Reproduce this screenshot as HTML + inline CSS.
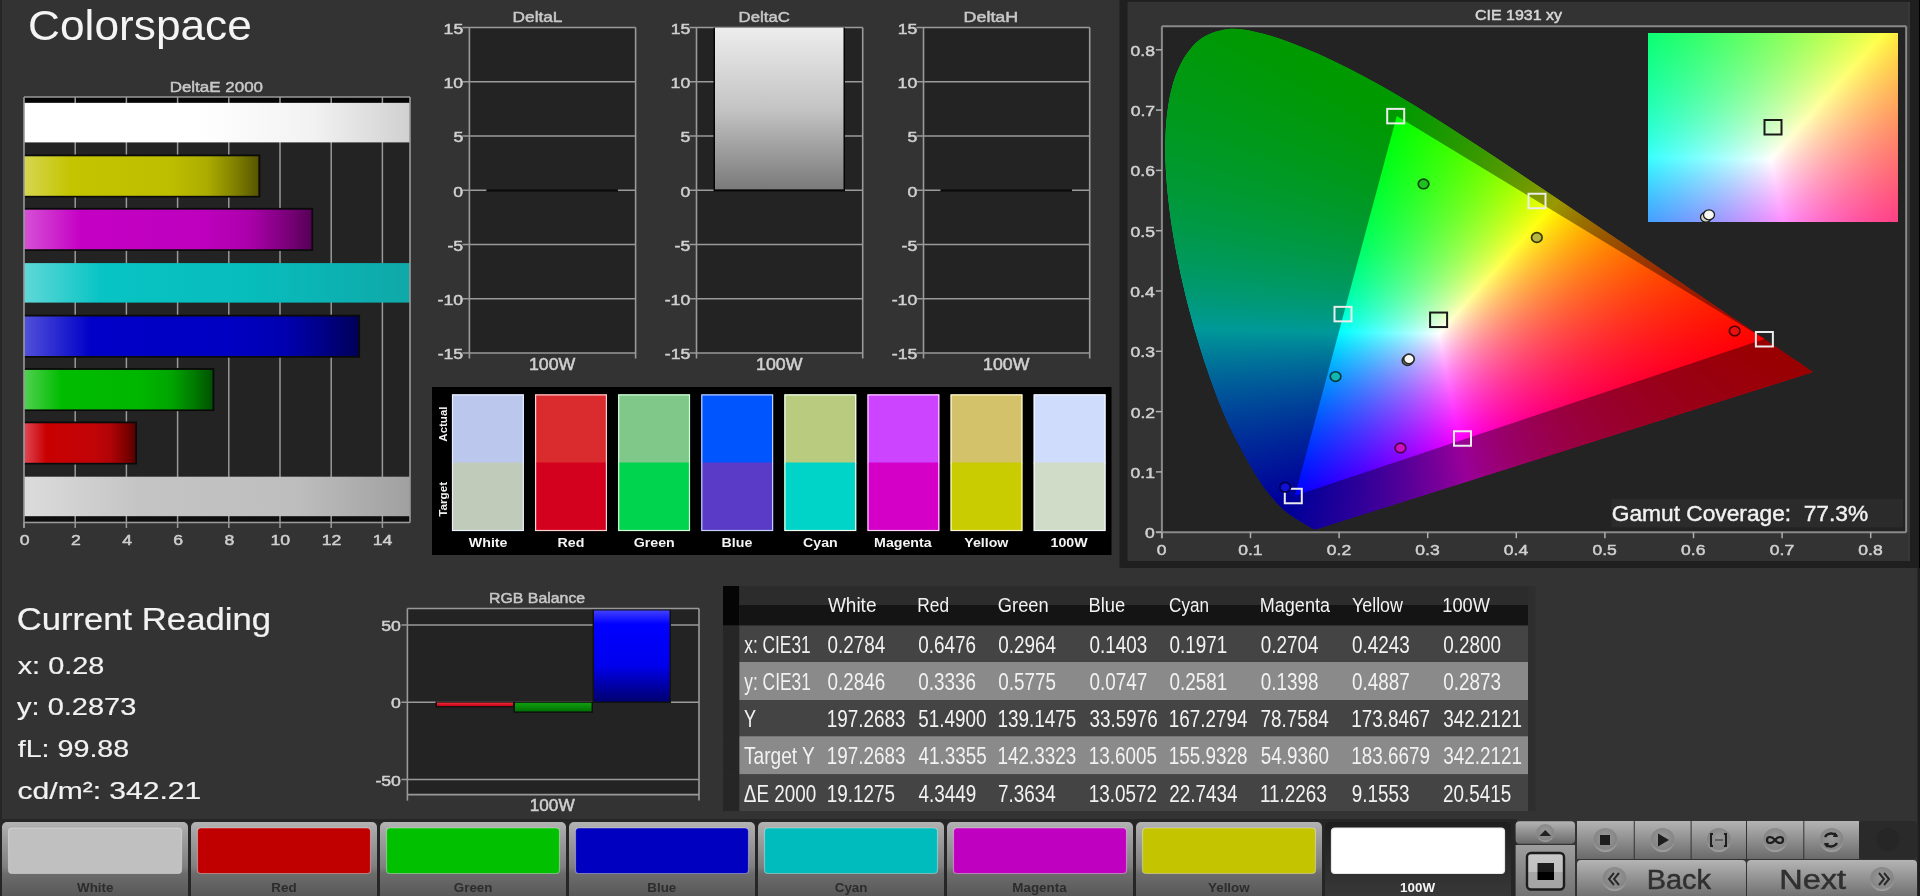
<!DOCTYPE html>
<html><head><meta charset="utf-8"><title>Colorspace</title>
<style>
html,body{margin:0;padding:0;width:1920px;height:896px;overflow:hidden;background:#333333;font-family:"Liberation Sans", sans-serif;}
svg text{font-family:"Liberation Sans", sans-serif;}
</style></head><body>
<svg width="1920" height="896" style="position:absolute;left:0;top:0;will-change:transform" font-family='"Liberation Sans", sans-serif'><defs><linearGradient id="bar0" x1="0" y1="0" x2="1" y2="0"><stop offset="0" stop-color="#ffffff"/><stop offset="0.45" stop-color="#ffffff"/><stop offset="0.75" stop-color="#f2f2f2"/><stop offset="1" stop-color="#d0d0d0"/></linearGradient><linearGradient id="bar1" x1="0" y1="0" x2="1" y2="0"><stop offset="0" stop-color="#d6d651"/><stop offset="0.2" stop-color="#c4c400"/><stop offset="0.62" stop-color="#bebe00"/><stop offset="0.78" stop-color="#acac00"/><stop offset="0.9" stop-color="#818100"/><stop offset="1" stop-color="#565600"/></linearGradient><linearGradient id="bar2" x1="0" y1="0" x2="1" y2="0"><stop offset="0" stop-color="#d651d6"/><stop offset="0.2" stop-color="#c400c4"/><stop offset="0.62" stop-color="#be00be"/><stop offset="0.78" stop-color="#ac00ac"/><stop offset="0.9" stop-color="#810081"/><stop offset="1" stop-color="#560056"/></linearGradient><linearGradient id="bar3" x1="0" y1="0" x2="1" y2="0"><stop offset="0" stop-color="#60d8d8"/><stop offset="0.2" stop-color="#08c4c4"/><stop offset="0.6" stop-color="#08bcbc"/><stop offset="1" stop-color="#10a8a8"/></linearGradient><linearGradient id="bar4" x1="0" y1="0" x2="1" y2="0"><stop offset="0" stop-color="#5151d9"/><stop offset="0.2" stop-color="#0000c8"/><stop offset="0.62" stop-color="#0000c2"/><stop offset="0.78" stop-color="#0000b0"/><stop offset="0.9" stop-color="#000084"/><stop offset="1" stop-color="#000058"/></linearGradient><linearGradient id="bar5" x1="0" y1="0" x2="1" y2="0"><stop offset="0" stop-color="#51d151"/><stop offset="0.2" stop-color="#00bc00"/><stop offset="0.62" stop-color="#00b600"/><stop offset="0.78" stop-color="#00a500"/><stop offset="0.9" stop-color="#007c00"/><stop offset="1" stop-color="#005200"/></linearGradient><linearGradient id="bar6" x1="0" y1="0" x2="1" y2="0"><stop offset="0" stop-color="#e04858"/><stop offset="0.2" stop-color="#c80000"/><stop offset="0.62" stop-color="#c20408"/><stop offset="0.78" stop-color="#b00408"/><stop offset="0.9" stop-color="#860000"/><stop offset="1" stop-color="#5a0000"/></linearGradient><linearGradient id="bar7" x1="0" y1="0" x2="1" y2="0"><stop offset="0" stop-color="#dcdcdc"/><stop offset="0.3" stop-color="#c4c4c4"/><stop offset="0.7" stop-color="#bebebe"/><stop offset="1" stop-color="#a0a0a0"/></linearGradient><linearGradient id="dcgrad" x1="0" y1="0" x2="0" y2="1"><stop offset="0" stop-color="#ededed"/><stop offset="0.5" stop-color="#c4c4c4"/><stop offset="1" stop-color="#7a7a7a"/></linearGradient><linearGradient id="rbar" x1="0" y1="0" x2="0" y2="1"><stop offset="0" stop-color="#f03040"/><stop offset="1" stop-color="#c00010"/></linearGradient><linearGradient id="gbar" x1="0" y1="0" x2="0" y2="1"><stop offset="0" stop-color="#10a010"/><stop offset="1" stop-color="#007000"/></linearGradient><linearGradient id="bbar" x1="0" y1="0" x2="0" y2="1"><stop offset="0" stop-color="#4040ff"/><stop offset="0.15" stop-color="#0000ff"/><stop offset="0.6" stop-color="#0000ee"/><stop offset="1" stop-color="#000070"/></linearGradient><linearGradient id="btng" gradientUnits="userSpaceOnUse" x1="0" y1="822" x2="0" y2="896"><stop offset="0" stop-color="#b4b4b4"/><stop offset="0.12" stop-color="#a6a6a6"/><stop offset="0.6" stop-color="#808080"/><stop offset="0.7" stop-color="#6c6c6c"/><stop offset="1" stop-color="#585858"/></linearGradient><linearGradient id="btnsel" x1="0" y1="0" x2="0" y2="1"><stop offset="0" stop-color="#1e1e1e"/><stop offset="1" stop-color="#3a3a3a"/></linearGradient><linearGradient id="ctlg" x1="0" y1="0" x2="0" y2="1"><stop offset="0" stop-color="#b4b4b4"/><stop offset="1" stop-color="#6a6a6a"/></linearGradient><radialGradient id="knob" cx="0.5" cy="0.4" r="0.6"><stop offset="0" stop-color="#9a9a9a"/><stop offset="0.8" stop-color="#858585"/><stop offset="1" stop-color="#a8a8a8"/></radialGradient><linearGradient id="ctll" x1="0" y1="0" x2="0" y2="1"><stop offset="0" stop-color="#9e9e9e"/><stop offset="1" stop-color="#727272"/></linearGradient><linearGradient id="stopbox" x1="0" y1="0" x2="0" y2="1"><stop offset="0" stop-color="#c8c8c8"/><stop offset="0.52" stop-color="#c0c0c0"/><stop offset="0.52" stop-color="#a8a8a8"/><stop offset="1" stop-color="#a4a4a4"/></linearGradient><linearGradient id="stopsq" x1="0" y1="0" x2="0" y2="1"><stop offset="0" stop-color="#1e1e1e"/><stop offset="0.55" stop-color="#1a1a1a"/><stop offset="0.55" stop-color="#000"/><stop offset="1" stop-color="#000"/></linearGradient></defs><rect x="0" y="0" width="2" height="896" fill="#262626"/><rect x="1917.5" y="568" width="2.5" height="328" fill="#1e1e1e"/><text x="28.09" y="40.20" font-size="42" fill="#f4f4f4" transform="matrix(1.0532,0,0,1,-1.494,0)" >Colorspace</text><text x="169.64" y="92.00" font-size="15.5" fill="#c8c8c8" transform="matrix(1.0952,0,0,1,-16.153,0)"  stroke="#c8c8c8" stroke-width="0.5">DeltaE 2000</text><rect x="24.0" y="97.0" width="386.0" height="425.5" fill="#232323"/><rect x="24.0" y="97.0" width="386.0" height="5.5" fill="#050505"/><rect x="24.0" y="515.5" width="386.0" height="6" fill="#0e0e0e"/><line x1="75.20" y1="97.0" x2="75.20" y2="522.5" stroke="#9a9a9a" stroke-width="1.5"/><line x1="126.40" y1="97.0" x2="126.40" y2="522.5" stroke="#9a9a9a" stroke-width="1.5"/><line x1="177.60" y1="97.0" x2="177.60" y2="522.5" stroke="#9a9a9a" stroke-width="1.5"/><line x1="228.80" y1="97.0" x2="228.80" y2="522.5" stroke="#9a9a9a" stroke-width="1.5"/><line x1="280.00" y1="97.0" x2="280.00" y2="522.5" stroke="#9a9a9a" stroke-width="1.5"/><line x1="331.20" y1="97.0" x2="331.20" y2="522.5" stroke="#9a9a9a" stroke-width="1.5"/><line x1="382.40" y1="97.0" x2="382.40" y2="522.5" stroke="#9a9a9a" stroke-width="1.5"/><rect x="24.0" y="102.90" width="386.00" height="39.5" fill="url(#bar0)"/><rect x="24.0" y="154.50" width="236.17" height="43" fill="#0a0a0a"/><rect x="24.0" y="156.30" width="234.37" height="39.5" fill="url(#bar1)"/><rect x="24.0" y="207.90" width="289.19" height="43" fill="#0a0a0a"/><rect x="24.0" y="209.70" width="287.39" height="39.5" fill="url(#bar2)"/><rect x="24.0" y="263.10" width="386.00" height="39.5" fill="url(#bar3)"/><rect x="24.0" y="314.70" width="336.06" height="43" fill="#0a0a0a"/><rect x="24.0" y="316.50" width="334.26" height="39.5" fill="url(#bar4)"/><rect x="24.0" y="368.10" width="190.29" height="43" fill="#0a0a0a"/><rect x="24.0" y="369.90" width="188.49" height="39.5" fill="url(#bar5)"/><rect x="24.0" y="421.50" width="113.03" height="43" fill="#0a0a0a"/><rect x="24.0" y="423.30" width="111.23" height="39.5" fill="url(#bar6)"/><rect x="24.0" y="476.70" width="386.00" height="39.5" fill="url(#bar7)"/><line x1="24.0" y1="97.0" x2="410.0" y2="97.0" stroke="#9a9a9a" stroke-width="1.6"/><line x1="24.0" y1="97.0" x2="24.0" y2="528.0" stroke="#9a9a9a" stroke-width="1.6"/><line x1="410.0" y1="97.0" x2="410.0" y2="522.5" stroke="#9a9a9a" stroke-width="1.6"/><line x1="24.0" y1="522.5" x2="410.0" y2="522.5" stroke="#9a9a9a" stroke-width="1.6"/><line x1="24.00" y1="522.5" x2="24.00" y2="528" stroke="#9a9a9a" stroke-width="1.5"/><text x="19.65" y="545.40" font-size="15.5" fill="#d0d0d0" transform="matrix(1.1400,0,0,1,-2.751,0)"  stroke="#d0d0d0" stroke-width="0.5">0</text><line x1="75.20" y1="522.5" x2="75.20" y2="528" stroke="#9a9a9a" stroke-width="1.5"/><text x="70.90" y="545.40" font-size="15.5" fill="#d0d0d0" transform="matrix(1.1400,0,0,1,-9.926,0)"  stroke="#d0d0d0" stroke-width="0.5">2</text><line x1="126.40" y1="522.5" x2="126.40" y2="528" stroke="#9a9a9a" stroke-width="1.5"/><text x="122.18" y="545.40" font-size="15.5" fill="#d0d0d0" transform="matrix(1.1400,0,0,1,-17.106,0)"  stroke="#d0d0d0" stroke-width="0.5">4</text><line x1="177.60" y1="522.5" x2="177.60" y2="528" stroke="#9a9a9a" stroke-width="1.5"/><text x="173.21" y="545.40" font-size="15.5" fill="#d0d0d0" transform="matrix(1.1400,0,0,1,-24.249,0)"  stroke="#d0d0d0" stroke-width="0.5">6</text><line x1="228.80" y1="522.5" x2="228.80" y2="528" stroke="#9a9a9a" stroke-width="1.5"/><text x="224.45" y="545.40" font-size="15.5" fill="#d0d0d0" transform="matrix(1.1400,0,0,1,-31.423,0)"  stroke="#d0d0d0" stroke-width="0.5">8</text><line x1="280.00" y1="522.5" x2="280.00" y2="528" stroke="#9a9a9a" stroke-width="1.5"/><text x="270.44" y="545.40" font-size="15.5" fill="#d0d0d0" transform="matrix(1.1400,0,0,1,-37.862,0)"  stroke="#d0d0d0" stroke-width="0.5">10</text><line x1="331.20" y1="522.5" x2="331.20" y2="528" stroke="#9a9a9a" stroke-width="1.5"/><text x="321.77" y="545.40" font-size="15.5" fill="#d0d0d0" transform="matrix(1.1400,0,0,1,-45.048,0)"  stroke="#d0d0d0" stroke-width="0.5">12</text><line x1="382.40" y1="522.5" x2="382.40" y2="528" stroke="#9a9a9a" stroke-width="1.5"/><text x="372.80" y="545.40" font-size="15.5" fill="#d0d0d0" transform="matrix(1.1400,0,0,1,-52.191,0)"  stroke="#d0d0d0" stroke-width="0.5">14</text><text x="512.62" y="22.50" font-size="15.5" fill="#c8c8c8" transform="matrix(1.1139,0,0,1,-58.412,0)"  stroke="#c8c8c8" stroke-width="0.5">DeltaL</text><rect x="469.4" y="27.6" width="166.2" height="325.5" fill="#232323"/><line x1="462.4" y1="27.60" x2="635.5999999999999" y2="27.60" stroke="#9a9a9a" stroke-width="1.5"/><text x="443.59" y="33.80" font-size="15.5" fill="#d0d0d0" transform="matrix(1.1400,0,0,1,-62.103,0)"  stroke="#d0d0d0" stroke-width="0.5">15</text><line x1="462.4" y1="81.85" x2="635.5999999999999" y2="81.85" stroke="#9a9a9a" stroke-width="1.5"/><text x="443.50" y="88.05" font-size="15.5" fill="#d0d0d0" transform="matrix(1.1400,0,0,1,-62.091,0)"  stroke="#d0d0d0" stroke-width="0.5">10</text><line x1="462.4" y1="136.10" x2="635.5999999999999" y2="136.10" stroke="#9a9a9a" stroke-width="1.5"/><text x="453.40" y="142.30" font-size="15.5" fill="#d0d0d0" transform="matrix(1.1400,0,0,1,-63.476,0)"  stroke="#d0d0d0" stroke-width="0.5">5</text><line x1="462.4" y1="190.35" x2="635.5999999999999" y2="190.35" stroke="#9a9a9a" stroke-width="1.5"/><text x="453.31" y="196.55" font-size="15.5" fill="#d0d0d0" transform="matrix(1.1400,0,0,1,-63.464,0)"  stroke="#d0d0d0" stroke-width="0.5">0</text><line x1="462.4" y1="244.60" x2="635.5999999999999" y2="244.60" stroke="#9a9a9a" stroke-width="1.5"/><text x="447.48" y="250.80" font-size="15.5" fill="#d0d0d0" transform="matrix(1.1400,0,0,1,-62.647,0)"  stroke="#d0d0d0" stroke-width="0.5">-5</text><line x1="462.4" y1="298.85" x2="635.5999999999999" y2="298.85" stroke="#9a9a9a" stroke-width="1.5"/><text x="437.59" y="305.05" font-size="15.5" fill="#d0d0d0" transform="matrix(1.1400,0,0,1,-61.262,0)"  stroke="#d0d0d0" stroke-width="0.5">-10</text><line x1="462.4" y1="353.10" x2="635.5999999999999" y2="353.10" stroke="#9a9a9a" stroke-width="1.5"/><text x="437.67" y="359.30" font-size="15.5" fill="#d0d0d0" transform="matrix(1.1400,0,0,1,-61.274,0)"  stroke="#d0d0d0" stroke-width="0.5">-15</text><rect x="486.4" y="189.15" width="131.5" height="2.4" fill="#0a0a0a"/><line x1="469.4" y1="27.6" x2="469.4" y2="358.60" stroke="#9a9a9a" stroke-width="1.6"/><line x1="635.5999999999999" y1="27.6" x2="635.5999999999999" y2="358.60" stroke="#9a9a9a" stroke-width="1.6"/><text x="528.96" y="369.90" font-size="16" fill="#d0d0d0" transform="matrix(1.1100,0,0,1,-58.185,0)"  stroke="#d0d0d0" stroke-width="0.5">100W</text><text x="738.66" y="22.50" font-size="15.5" fill="#c8c8c8" transform="matrix(1.0840,0,0,1,-62.081,0)"  stroke="#c8c8c8" stroke-width="0.5">DeltaC</text><rect x="696.5" y="27.6" width="166.2" height="325.5" fill="#232323"/><line x1="689.5" y1="27.60" x2="862.7" y2="27.60" stroke="#9a9a9a" stroke-width="1.5"/><text x="670.69" y="33.80" font-size="15.5" fill="#d0d0d0" transform="matrix(1.1400,0,0,1,-93.897,0)"  stroke="#d0d0d0" stroke-width="0.5">15</text><line x1="689.5" y1="81.85" x2="862.7" y2="81.85" stroke="#9a9a9a" stroke-width="1.5"/><text x="670.60" y="88.05" font-size="15.5" fill="#d0d0d0" transform="matrix(1.1400,0,0,1,-93.885,0)"  stroke="#d0d0d0" stroke-width="0.5">10</text><line x1="689.5" y1="136.10" x2="862.7" y2="136.10" stroke="#9a9a9a" stroke-width="1.5"/><text x="680.50" y="142.30" font-size="15.5" fill="#d0d0d0" transform="matrix(1.1400,0,0,1,-95.270,0)"  stroke="#d0d0d0" stroke-width="0.5">5</text><line x1="689.5" y1="190.35" x2="862.7" y2="190.35" stroke="#9a9a9a" stroke-width="1.5"/><text x="680.41" y="196.55" font-size="15.5" fill="#d0d0d0" transform="matrix(1.1400,0,0,1,-95.258,0)"  stroke="#d0d0d0" stroke-width="0.5">0</text><line x1="689.5" y1="244.60" x2="862.7" y2="244.60" stroke="#9a9a9a" stroke-width="1.5"/><text x="674.58" y="250.80" font-size="15.5" fill="#d0d0d0" transform="matrix(1.1400,0,0,1,-94.441,0)"  stroke="#d0d0d0" stroke-width="0.5">-5</text><line x1="689.5" y1="298.85" x2="862.7" y2="298.85" stroke="#9a9a9a" stroke-width="1.5"/><text x="664.69" y="305.05" font-size="15.5" fill="#d0d0d0" transform="matrix(1.1400,0,0,1,-93.056,0)"  stroke="#d0d0d0" stroke-width="0.5">-10</text><line x1="689.5" y1="353.10" x2="862.7" y2="353.10" stroke="#9a9a9a" stroke-width="1.5"/><text x="664.77" y="359.30" font-size="15.5" fill="#d0d0d0" transform="matrix(1.1400,0,0,1,-93.068,0)"  stroke="#d0d0d0" stroke-width="0.5">-15</text><rect x="713.5" y="27.6" width="131.5" height="163.75" fill="#050505"/><rect x="715.0" y="27.6" width="128.5" height="161.75" fill="url(#dcgrad)"/><line x1="696.5" y1="27.6" x2="696.5" y2="358.60" stroke="#9a9a9a" stroke-width="1.6"/><line x1="862.7" y1="27.6" x2="862.7" y2="358.60" stroke="#9a9a9a" stroke-width="1.6"/><text x="756.06" y="369.90" font-size="16" fill="#d0d0d0" transform="matrix(1.1100,0,0,1,-83.166,0)"  stroke="#d0d0d0" stroke-width="0.5">100W</text><text x="963.57" y="22.50" font-size="15.5" fill="#c8c8c8" transform="matrix(1.1544,0,0,1,-148.758,0)"  stroke="#c8c8c8" stroke-width="0.5">DeltaH</text><rect x="923.5" y="27.6" width="166.2" height="325.5" fill="#232323"/><line x1="916.5" y1="27.60" x2="1089.7" y2="27.60" stroke="#9a9a9a" stroke-width="1.5"/><text x="897.69" y="33.80" font-size="15.5" fill="#d0d0d0" transform="matrix(1.1400,0,0,1,-125.677,0)"  stroke="#d0d0d0" stroke-width="0.5">15</text><line x1="916.5" y1="81.85" x2="1089.7" y2="81.85" stroke="#9a9a9a" stroke-width="1.5"/><text x="897.60" y="88.05" font-size="15.5" fill="#d0d0d0" transform="matrix(1.1400,0,0,1,-125.665,0)"  stroke="#d0d0d0" stroke-width="0.5">10</text><line x1="916.5" y1="136.10" x2="1089.7" y2="136.10" stroke="#9a9a9a" stroke-width="1.5"/><text x="907.50" y="142.30" font-size="15.5" fill="#d0d0d0" transform="matrix(1.1400,0,0,1,-127.050,0)"  stroke="#d0d0d0" stroke-width="0.5">5</text><line x1="916.5" y1="190.35" x2="1089.7" y2="190.35" stroke="#9a9a9a" stroke-width="1.5"/><text x="907.41" y="196.55" font-size="15.5" fill="#d0d0d0" transform="matrix(1.1400,0,0,1,-127.038,0)"  stroke="#d0d0d0" stroke-width="0.5">0</text><line x1="916.5" y1="244.60" x2="1089.7" y2="244.60" stroke="#9a9a9a" stroke-width="1.5"/><text x="901.58" y="250.80" font-size="15.5" fill="#d0d0d0" transform="matrix(1.1400,0,0,1,-126.221,0)"  stroke="#d0d0d0" stroke-width="0.5">-5</text><line x1="916.5" y1="298.85" x2="1089.7" y2="298.85" stroke="#9a9a9a" stroke-width="1.5"/><text x="891.69" y="305.05" font-size="15.5" fill="#d0d0d0" transform="matrix(1.1400,0,0,1,-124.836,0)"  stroke="#d0d0d0" stroke-width="0.5">-10</text><line x1="916.5" y1="353.10" x2="1089.7" y2="353.10" stroke="#9a9a9a" stroke-width="1.5"/><text x="891.77" y="359.30" font-size="15.5" fill="#d0d0d0" transform="matrix(1.1400,0,0,1,-124.848,0)"  stroke="#d0d0d0" stroke-width="0.5">-15</text><rect x="940.5" y="189.15" width="131.5" height="2.4" fill="#0a0a0a"/><line x1="923.5" y1="27.6" x2="923.5" y2="358.60" stroke="#9a9a9a" stroke-width="1.6"/><line x1="1089.7" y1="27.6" x2="1089.7" y2="358.60" stroke="#9a9a9a" stroke-width="1.6"/><text x="983.06" y="369.90" font-size="16" fill="#d0d0d0" transform="matrix(1.1100,0,0,1,-108.136,0)"  stroke="#d0d0d0" stroke-width="0.5">100W</text><rect x="432" y="387" width="679.5" height="168" fill="#000"/><rect x="452.00" y="394.4" width="71.8" height="70" fill="#bcc7ee"/><rect x="452.00" y="462.5" width="71.8" height="68.5" fill="#c0cbb9"/><rect x="452.50" y="394.9" width="70.8" height="135.6" fill="none" stroke="#e8f0ff" stroke-width="1.2"/><text x="468.82" y="546.50" font-size="12.4" fill="#f4f4f4" font-weight="bold" transform="matrix(1.1460,0,0,1,-68.448,0)" >White</text><rect x="535.10" y="394.4" width="71.8" height="70" fill="#da2b2f"/><rect x="535.10" y="462.5" width="71.8" height="68.5" fill="#d3001e"/><rect x="535.60" y="394.9" width="70.8" height="135.6" fill="none" stroke="#ffd0d0" stroke-width="1.2"/><text x="557.57" y="546.50" font-size="12.4" fill="#f4f4f4" font-weight="bold" transform="matrix(1.1460,0,0,1,-81.405,0)" >Red</text><rect x="618.20" y="394.4" width="71.8" height="70" fill="#7fc88a"/><rect x="618.20" y="462.5" width="71.8" height="68.5" fill="#00d44e"/><rect x="618.70" y="394.9" width="70.8" height="135.6" fill="none" stroke="#d0ffd8" stroke-width="1.2"/><text x="633.71" y="546.50" font-size="12.4" fill="#f4f4f4" font-weight="bold" transform="matrix(1.1460,0,0,1,-92.521,0)" >Green</text><rect x="701.30" y="394.4" width="71.8" height="70" fill="#0055ff"/><rect x="701.30" y="462.5" width="71.8" height="68.5" fill="#5a3bc8"/><rect x="701.80" y="394.9" width="70.8" height="135.6" fill="none" stroke="#c0d0ff" stroke-width="1.2"/><text x="721.60" y="546.50" font-size="12.4" fill="#f4f4f4" font-weight="bold" transform="matrix(1.1460,0,0,1,-105.354,0)" >Blue</text><rect x="784.40" y="394.4" width="71.8" height="70" fill="#b8cb7e"/><rect x="784.40" y="462.5" width="71.8" height="68.5" fill="#00d4c8"/><rect x="784.90" y="394.9" width="70.8" height="135.6" fill="none" stroke="#f0fff0" stroke-width="1.2"/><text x="803.07" y="546.50" font-size="12.4" fill="#f4f4f4" font-weight="bold" transform="matrix(1.1460,0,0,1,-117.248,0)" >Cyan</text><rect x="867.50" y="394.4" width="71.8" height="70" fill="#cc44ff"/><rect x="867.50" y="462.5" width="71.8" height="68.5" fill="#d400c8"/><rect x="868.00" y="394.9" width="70.8" height="135.6" fill="none" stroke="#ffd8ff" stroke-width="1.2"/><text x="874.06" y="546.50" font-size="12.4" fill="#f4f4f4" font-weight="bold" transform="matrix(1.1460,0,0,1,-127.612,0)" >Magenta</text><rect x="950.60" y="394.4" width="71.8" height="70" fill="#d3c26a"/><rect x="950.60" y="462.5" width="71.8" height="68.5" fill="#c8cc00"/><rect x="951.10" y="394.9" width="70.8" height="135.6" fill="none" stroke="#fff8d0" stroke-width="1.2"/><text x="964.23" y="546.50" font-size="12.4" fill="#f4f4f4" font-weight="bold" transform="matrix(1.1460,0,0,1,-140.777,0)" >Yellow</text><rect x="1033.70" y="394.4" width="71.8" height="70" fill="#d0dcfc"/><rect x="1033.70" y="462.5" width="71.8" height="68.5" fill="#d0dcc8"/><rect x="1034.20" y="394.9" width="70.8" height="135.6" fill="none" stroke="#f4f8ff" stroke-width="1.2"/><text x="1050.59" y="546.50" font-size="12.4" fill="#f4f4f4" font-weight="bold" transform="matrix(1.1460,0,0,1,-153.387,0)" >100W</text><g transform="translate(447.4,424.35) rotate(-90)"><text x="-17.34" y="0.00" font-size="11.5" fill="#f0f0f0" font-weight="bold" transform="matrix(1.0001,0,0,1,0.001,0)" >Actual</text></g><g transform="translate(447.4,499.35) rotate(-90)"><text x="-17.47" y="0.00" font-size="11.5" fill="#f0f0f0" font-weight="bold" transform="matrix(1.0194,0,0,1,0.339,0)" >Target</text></g><rect x="1119.5" y="0" width="800.5" height="568" fill="#1f1f1f"/><rect x="1127.5" y="1.8" width="780.5" height="559.2" fill="#333333"/><rect x="1908" y="1.8" width="2" height="559.2" fill="#383838"/><rect x="1919" y="0" width="1" height="568" fill="#000"/><text x="1475.00" y="20.40" font-size="14.9" fill="#d6d6d6" transform="matrix(1.0723,0,0,1,-106.691,0)"  stroke="#d6d6d6" stroke-width="0.5">CIE 1931 xy</text><rect x="1161.9" y="26.2" width="744.3" height="506.0" fill="#232323"/></svg>
<div style="position:absolute;left:1161.9px;top:26.2px;width:744.3px;height:506.0px;overflow:hidden">
<div style="position:absolute;left:0;top:0;width:100%;height:100%;clip-path:path('M154.3,503.0 C154.2,503.0 154.1,503.0 154.0,503.0 C153.9,503.1 153.7,503.1 153.5,503.1 C153.4,503.1 153.2,503.1 152.9,503.1 C152.6,503.1 152.2,503.0 151.9,502.9 C151.5,502.8 151.3,502.7 150.9,502.5 C150.5,502.3 150.1,502.1 149.6,501.8 C149.1,501.6 148.5,501.2 147.9,500.8 C147.2,500.4 146.5,499.9 145.7,499.4 C144.8,498.9 143.9,498.4 142.7,497.7 C141.6,497.0 140.2,496.2 138.7,495.3 C137.3,494.4 135.6,493.5 133.8,492.3 C131.9,491.1 129.9,489.8 127.6,488.1 C125.3,486.4 123.0,484.8 120.1,481.9 C117.1,479.1 113.8,475.9 110.0,471.1 C106.1,466.4 101.9,461.2 97.1,453.7 C92.3,446.1 86.9,437.4 80.9,426.0 C74.9,414.5 67.6,401.3 60.9,385.0 C54.1,368.7 46.9,349.4 40.2,328.1 C33.5,306.8 26.3,281.6 20.8,257.1 C15.3,232.7 10.2,205.7 7.3,181.3 C4.4,157.0 2.6,132.4 3.5,111.2 C4.3,89.9 7.1,69.4 12.3,53.6 C17.5,37.8 25.5,24.8 34.5,16.4 C43.4,8.0 54.7,4.6 65.8,3.2 C76.9,1.8 89.3,5.0 101.2,7.8 C113.1,10.6 125.4,15.6 137.1,20.0 C148.7,24.5 159.8,29.5 170.9,34.7 C182.0,39.9 192.7,45.4 203.4,51.2 C214.2,56.9 224.9,63.0 235.5,69.2 C246.1,75.5 256.7,82.0 267.2,88.5 C277.8,95.1 288.3,101.9 298.8,108.7 C309.4,115.5 320.0,122.5 330.6,129.4 C341.1,136.4 351.6,143.5 362.1,150.5 C372.6,157.5 383.1,164.5 393.5,171.5 C403.8,178.5 414.1,185.5 424.2,192.3 C434.3,199.2 444.3,206.0 454.1,212.6 C463.8,219.2 473.4,225.7 482.7,232.0 C492.0,238.3 501.0,244.4 509.6,250.2 C518.2,256.0 526.5,261.7 534.2,266.9 C541.8,272.1 548.8,276.8 555.5,281.4 C562.2,285.9 568.6,290.2 574.3,294.1 C580.0,298.0 585.2,301.4 589.9,304.6 C594.6,307.8 598.8,310.6 602.6,313.2 C606.4,315.8 609.6,318.0 612.7,320.1 C615.7,322.1 618.3,323.9 620.7,325.5 C623.2,327.2 625.2,328.6 627.2,329.9 C629.2,331.3 631.0,332.5 632.6,333.6 C634.2,334.7 635.7,335.7 637.0,336.6 C638.4,337.5 639.5,338.3 640.6,339.0 C641.6,339.7 642.5,340.2 643.2,340.8 C644.0,341.3 644.7,341.8 645.3,342.2 C645.9,342.6 646.2,342.8 646.8,343.2 C647.3,343.6 648.0,344.1 648.6,344.4 C649.1,344.7 649.4,345.0 649.8,345.2 C650.2,345.5 650.8,345.9 650.9,346.0 Z');background:conic-gradient(from 0deg at 277.1px 307.6px, #1dff00 0deg, #71ff00 20deg, #efff00 40deg, #ff8700 60deg, #ff3502 80deg, #ff0022 100deg, #ff0049 120deg, #ff007b 140deg, #ff00cd 160deg, #f800ff 170deg, #c000ff 180deg, #5c00ff 200deg, #0000ff 220deg, #003eff 240deg, #00acff 260deg, #00f8ff 270deg, #00ffbd 280deg, #00ff62 300deg, #00ff2b 320deg, #00ff06 340deg, #1dff00 360deg);filter:brightness(0.6)"></div>
<div style="position:absolute;left:0;top:0;width:100%;height:100%;clip-path:polygon(234.8px 89.9px,602.5px 313.0px,132.9px 469.8px);background:radial-gradient(ellipse 150px 120px at 277.1px 307.6px, rgba(255,255,255,1) 0%, rgba(255,255,255,0.6) 25%, rgba(255,255,255,0.25) 60%, rgba(255,255,255,0) 100%),conic-gradient(from 0deg at 277.1px 307.6px, #1dff00 0deg, #71ff00 20deg, #efff00 40deg, #ff8700 60deg, #ff3502 80deg, #ff0022 100deg, #ff0049 120deg, #ff007b 140deg, #ff00cd 160deg, #f800ff 170deg, #c000ff 180deg, #5c00ff 200deg, #0000ff 220deg, #003eff 240deg, #00acff 260deg, #00f8ff 270deg, #00ffbd 280deg, #00ff62 300deg, #00ff2b 320deg, #00ff06 340deg, #1dff00 360deg)"></div>
<canvas id="cie" width="744" height="506" style="position:absolute;left:0;top:0"></canvas>
</div>
<div style="position:absolute;left:1647.5px;top:32.8px;width:250.5px;height:189.5px;background:radial-gradient(circle at 123.5px 127.2px, rgba(255,255,255,1) 0px, rgba(255,255,255,0.7) 25px, rgba(255,255,255,0.25) 90px, rgba(255,255,255,0) 180px),conic-gradient(from 0deg at 123.5px 127.2px, #a0ff80 0deg, #ffff70 40deg, #ffa060 75deg, #ff6070 110deg, #ff4080 140deg, #ff80ff 178deg, #a080ff 215deg, #40a0ff 245deg, #20ffff 272deg, #40ff90 310deg, #00ff60 335deg, #a0ff80 360deg)">
<canvas id="inset" width="251" height="190" style="position:absolute;left:0;top:0;width:250.5px;height:189.5px"></canvas></div>
<svg width="1920" height="896" style="position:absolute;left:0;top:0;will-change:transform" font-family='"Liberation Sans", sans-serif'><line x1="1161.9" y1="26.2" x2="1906.2" y2="26.2" stroke="#8a8a8a" stroke-width="2"/><line x1="1161.9" y1="26.2" x2="1161.9" y2="538.2" stroke="#8a8a8a" stroke-width="2"/><line x1="1906.2" y1="26.2" x2="1906.2" y2="532.2" stroke="#8a8a8a" stroke-width="2"/><line x1="1155.9" y1="532.2" x2="1906.2" y2="532.2" stroke="#8a8a8a" stroke-width="2"/><line x1="1155.9" y1="532.20" x2="1161.9" y2="532.20" stroke="#b0b0b0" stroke-width="1.5"/><text x="1145.07" y="538.20" font-size="15" fill="#d0d0d0" transform="matrix(1.1700,0,0,1,-194.663,0)"  stroke="#d0d0d0" stroke-width="0.5">0</text><line x1="1161.90" y1="532.2" x2="1161.90" y2="538.2" stroke="#b0b0b0" stroke-width="1.5"/><text x="1156.79" y="555.00" font-size="15" fill="#d0d0d0" transform="matrix(1.1700,0,0,1,-196.654,0)"  stroke="#d0d0d0" stroke-width="0.5">0</text><line x1="1155.9" y1="471.90" x2="1161.9" y2="471.90" stroke="#b0b0b0" stroke-width="1.5"/><text x="1130.60" y="477.90" font-size="15" fill="#d0d0d0" transform="matrix(1.1700,0,0,1,-192.201,0)"  stroke="#d0d0d0" stroke-width="0.5">0.1</text><line x1="1250.50" y1="532.2" x2="1250.50" y2="538.2" stroke="#b0b0b0" stroke-width="1.5"/><text x="1238.15" y="555.00" font-size="15" fill="#d0d0d0" transform="matrix(1.1700,0,0,1,-210.485,0)"  stroke="#d0d0d0" stroke-width="0.5">0.1</text><line x1="1155.9" y1="411.60" x2="1161.9" y2="411.60" stroke="#b0b0b0" stroke-width="1.5"/><text x="1130.68" y="417.60" font-size="15" fill="#d0d0d0" transform="matrix(1.1700,0,0,1,-192.216,0)"  stroke="#d0d0d0" stroke-width="0.5">0.2</text><line x1="1339.10" y1="532.2" x2="1339.10" y2="538.2" stroke="#b0b0b0" stroke-width="1.5"/><text x="1326.79" y="555.00" font-size="15" fill="#d0d0d0" transform="matrix(1.1700,0,0,1,-225.554,0)"  stroke="#d0d0d0" stroke-width="0.5">0.2</text><line x1="1155.9" y1="351.30" x2="1161.9" y2="351.30" stroke="#b0b0b0" stroke-width="1.5"/><text x="1130.51" y="357.30" font-size="15" fill="#d0d0d0" transform="matrix(1.1700,0,0,1,-192.186,0)"  stroke="#d0d0d0" stroke-width="0.5">0.3</text><line x1="1427.70" y1="532.2" x2="1427.70" y2="538.2" stroke="#b0b0b0" stroke-width="1.5"/><text x="1415.30" y="555.00" font-size="15" fill="#d0d0d0" transform="matrix(1.1700,0,0,1,-240.601,0)"  stroke="#d0d0d0" stroke-width="0.5">0.3</text><line x1="1155.9" y1="291.00" x2="1161.9" y2="291.00" stroke="#b0b0b0" stroke-width="1.5"/><text x="1130.33" y="297.00" font-size="15" fill="#d0d0d0" transform="matrix(1.1700,0,0,1,-192.156,0)"  stroke="#d0d0d0" stroke-width="0.5">0.4</text><line x1="1516.30" y1="532.2" x2="1516.30" y2="538.2" stroke="#b0b0b0" stroke-width="1.5"/><text x="1503.82" y="555.00" font-size="15" fill="#d0d0d0" transform="matrix(1.1700,0,0,1,-255.649,0)"  stroke="#d0d0d0" stroke-width="0.5">0.4</text><line x1="1155.9" y1="230.70" x2="1161.9" y2="230.70" stroke="#b0b0b0" stroke-width="1.5"/><text x="1130.51" y="236.70" font-size="15" fill="#d0d0d0" transform="matrix(1.1700,0,0,1,-192.186,0)"  stroke="#d0d0d0" stroke-width="0.5">0.5</text><line x1="1604.90" y1="532.2" x2="1604.90" y2="538.2" stroke="#b0b0b0" stroke-width="1.5"/><text x="1592.50" y="555.00" font-size="15" fill="#d0d0d0" transform="matrix(1.1700,0,0,1,-270.725,0)"  stroke="#d0d0d0" stroke-width="0.5">0.5</text><line x1="1155.9" y1="170.40" x2="1161.9" y2="170.40" stroke="#b0b0b0" stroke-width="1.5"/><text x="1130.51" y="176.40" font-size="15" fill="#d0d0d0" transform="matrix(1.1700,0,0,1,-192.186,0)"  stroke="#d0d0d0" stroke-width="0.5">0.6</text><line x1="1693.50" y1="532.2" x2="1693.50" y2="538.2" stroke="#b0b0b0" stroke-width="1.5"/><text x="1681.10" y="555.00" font-size="15" fill="#d0d0d0" transform="matrix(1.1700,0,0,1,-285.787,0)"  stroke="#d0d0d0" stroke-width="0.5">0.6</text><line x1="1155.9" y1="110.10" x2="1161.9" y2="110.10" stroke="#b0b0b0" stroke-width="1.5"/><text x="1130.68" y="116.10" font-size="15" fill="#d0d0d0" transform="matrix(1.1700,0,0,1,-192.216,0)"  stroke="#d0d0d0" stroke-width="0.5">0.7</text><line x1="1782.10" y1="532.2" x2="1782.10" y2="538.2" stroke="#b0b0b0" stroke-width="1.5"/><text x="1769.79" y="555.00" font-size="15" fill="#d0d0d0" transform="matrix(1.1700,0,0,1,-300.864,0)"  stroke="#d0d0d0" stroke-width="0.5">0.7</text><line x1="1155.9" y1="49.80" x2="1161.9" y2="49.80" stroke="#b0b0b0" stroke-width="1.5"/><text x="1130.51" y="55.80" font-size="15" fill="#d0d0d0" transform="matrix(1.1700,0,0,1,-192.186,0)"  stroke="#d0d0d0" stroke-width="0.5">0.8</text><line x1="1870.70" y1="532.2" x2="1870.70" y2="538.2" stroke="#b0b0b0" stroke-width="1.5"/><text x="1858.30" y="555.00" font-size="15" fill="#d0d0d0" transform="matrix(1.1700,0,0,1,-315.911,0)"  stroke="#d0d0d0" stroke-width="0.5">0.8</text><rect x="1387.19" y="108.88" width="17" height="14.5" fill="none" stroke="#ececec" stroke-width="2"/><rect x="1755.88" y="331.99" width="17" height="14.5" fill="none" stroke="#ececec" stroke-width="2"/><rect x="1284.80" y="488.77" width="17" height="14.5" fill="none" stroke="#ececec" stroke-width="2"/><rect x="1334.50" y="306.85" width="17" height="14.5" fill="none" stroke="#ececec" stroke-width="2"/><rect x="1454.00" y="431.25" width="17" height="14.5" fill="none" stroke="#ececec" stroke-width="2"/><rect x="1528.50" y="193.75" width="17" height="14.5" fill="none" stroke="#ececec" stroke-width="2"/><rect x="1430.10" y="312.55" width="17" height="14.5" fill="none" stroke="#1a1a1a" stroke-width="2"/><ellipse cx="1734.67" cy="331.04" rx="5.3" ry="4.8" fill="#e81010" stroke="#500000" stroke-width="1.7"/><ellipse cx="1423.51" cy="183.97" rx="5.3" ry="4.8" fill="#20c020" stroke="#004800" stroke-width="1.7"/><ellipse cx="1285.21" cy="487.16" rx="5.3" ry="4.8" fill="#1010d8" stroke="#000048" stroke-width="1.7"/><ellipse cx="1335.53" cy="376.57" rx="5.3" ry="4.8" fill="#10b8b0" stroke="#003c3c" stroke-width="1.7"/><ellipse cx="1400.47" cy="447.90" rx="5.3" ry="4.8" fill="#d010c0" stroke="#4a0048" stroke-width="1.7"/><ellipse cx="1536.83" cy="237.51" rx="5.3" ry="4.8" fill="#b8b840" stroke="#3a3a00" stroke-width="1.7"/><ellipse cx="1407.56" cy="360.59" rx="5.3" ry="4.8" fill="#c8c8b8" stroke="#2a2a2a" stroke-width="1.7"/><ellipse cx="1408.98" cy="358.96" rx="5.3" ry="4.8" fill="#f8f8f4" stroke="#2a2a2a" stroke-width="1.7"/><rect x="1764.5" y="120" width="17" height="14.5" fill="none" stroke="#1a1a1a" stroke-width="2"/><ellipse cx="1706" cy="217.2" rx="5.5" ry="5" fill="#d0d0c0" stroke="#1a1a1a" stroke-width="1.3"/><ellipse cx="1709" cy="214.8" rx="5.5" ry="5" fill="#f8f8f4" stroke="#1a1a1a" stroke-width="1.3"/><rect x="1611.5" y="499" width="291.5" height="28.3" fill="#2b2b2b"/><text x="1611.86" y="520.70" font-size="21.3" fill="#f2f2f2" transform="matrix(1.0672,0,0,1,-108.376,0)"  stroke="#f2f2f2" stroke-width="0.4">Gamut Coverage:  77.3%</text><text x="16.67" y="630.30" font-size="31.6" fill="#f2f2f2" transform="matrix(1.0973,0,0,1,-1.622,0)"  stroke="#f2f2f2" stroke-width="0.2">Current Reading</text><text x="17.71" y="673.60" font-size="24.5" fill="#f2f2f2" transform="matrix(1.1774,0,0,1,-3.143,0)"  stroke="#f2f2f2" stroke-width="0.2">x: 0.28</text><text x="17.06" y="715.00" font-size="24.5" fill="#f2f2f2" transform="matrix(1.1834,0,0,1,-3.127,0)"  stroke="#f2f2f2" stroke-width="0.2">y: 0.2873</text><text x="17.67" y="757.50" font-size="24.5" fill="#f2f2f2" transform="matrix(1.1707,0,0,1,-3.017,0)"  stroke="#f2f2f2" stroke-width="0.2">fL: 99.88</text><text x="17.55" y="799.40" font-size="24.5" fill="#f2f2f2" transform="matrix(1.2269,0,0,1,-3.981,0)"  stroke="#f2f2f2" stroke-width="0.2">cd/m²: 342.21</text><text x="489.03" y="603.40" font-size="15.2" fill="#c8c8c8" transform="matrix(1.0453,0,0,1,-22.161,0)"  stroke="#c8c8c8" stroke-width="0.5">RGB Balance</text><rect x="407.4" y="608.5" width="291.6" height="186.1" fill="#232323"/><line x1="401.4" y1="625.00" x2="699.0" y2="625.00" stroke="#9a9a9a" stroke-width="1.5"/><text x="381.30" y="631.20" font-size="15.5" fill="#d0d0d0" transform="matrix(1.1400,0,0,1,-53.383,0)"  stroke="#d0d0d0" stroke-width="0.5">50</text><line x1="401.4" y1="702.25" x2="699.0" y2="702.25" stroke="#9a9a9a" stroke-width="1.5"/><text x="391.11" y="708.45" font-size="15.5" fill="#d0d0d0" transform="matrix(1.1400,0,0,1,-54.756,0)"  stroke="#d0d0d0" stroke-width="0.5">0</text><line x1="401.4" y1="779.50" x2="699.0" y2="779.50" stroke="#9a9a9a" stroke-width="1.5"/><text x="375.39" y="785.70" font-size="15.5" fill="#d0d0d0" transform="matrix(1.1400,0,0,1,-52.554,0)"  stroke="#d0d0d0" stroke-width="0.5">-50</text><rect x="435.5" y="701.5" width="79" height="6" fill="#111"/><rect x="437" y="702.6" width="76" height="3.5" fill="url(#rbar)"/><rect x="513.5" y="701.5" width="79.5" height="11.5" fill="#111"/><rect x="515" y="702.8" width="76.5" height="8.6" fill="url(#gbar)"/><rect x="592.5" y="609" width="78.5" height="94" fill="#111"/><rect x="594" y="610.5" width="75.5" height="91" fill="url(#bbar)"/><line x1="407.4" y1="608.5" x2="699.0" y2="608.5" stroke="#9a9a9a" stroke-width="1.6"/><line x1="407.4" y1="608.5" x2="407.4" y2="800.6" stroke="#9a9a9a" stroke-width="1.6"/><line x1="699.0" y1="608.5" x2="699.0" y2="800.6" stroke="#9a9a9a" stroke-width="1.6"/><line x1="407.4" y1="794.6" x2="699.0" y2="794.6" stroke="#9a9a9a" stroke-width="1.6"/><text x="529.71" y="811.50" font-size="16" fill="#d0d0d0" transform="matrix(1.0774,0,0,1,-41.008,0)"  stroke="#d0d0d0" stroke-width="0.5">100W</text><rect x="723" y="586" width="16.4" height="39.6" fill="#050505"/><rect x="739.4" y="586" width="788.6" height="19" fill="#2c2c2c"/><rect x="739.4" y="605" width="788.6" height="20.6" fill="#141414"/><rect x="1528" y="586" width="7.5" height="225" fill="#2e2e2e"/><rect x="723" y="625.6" width="16.4" height="36.40" fill="#262626"/><rect x="739.4" y="625.6" width="788.6" height="36.40" fill="#444444"/><rect x="723" y="662.0" width="16.4" height="38.00" fill="#262626"/><rect x="739.4" y="662.0" width="788.6" height="38.00" fill="#8a8a8a"/><rect x="723" y="700.0" width="16.4" height="36.25" fill="#262626"/><rect x="739.4" y="700.0" width="788.6" height="36.25" fill="#444444"/><rect x="723" y="736.25" width="16.4" height="38.15" fill="#262626"/><rect x="739.4" y="736.25" width="788.6" height="38.15" fill="#8a8a8a"/><rect x="723" y="774.4" width="16.4" height="36.60" fill="#262626"/><rect x="739.4" y="774.4" width="788.6" height="36.60" fill="#444444"/><text x="827.90" y="612.50" font-size="19.6" fill="#f2f2f2" transform="matrix(0.9695,0,0,1,25.260,0)" >White</text><text x="917.37" y="612.50" font-size="19.6" fill="#f2f2f2" transform="matrix(0.8830,0,0,1,107.290,0)" >Red</text><text x="997.84" y="612.50" font-size="19.6" fill="#f2f2f2" transform="matrix(0.9333,0,0,1,66.555,0)" >Green</text><text x="1088.53" y="612.50" font-size="19.6" fill="#f2f2f2" transform="matrix(0.9361,0,0,1,69.607,0)" >Blue</text><text x="1169.14" y="612.50" font-size="19.6" fill="#f2f2f2" transform="matrix(0.8733,0,0,1,148.104,0)" >Cyan</text><text x="1259.81" y="612.50" font-size="19.6" fill="#f2f2f2" transform="matrix(0.9200,0,0,1,100.785,0)" >Magenta</text><text x="1352.05" y="612.50" font-size="19.6" fill="#f2f2f2" transform="matrix(0.9104,0,0,1,121.097,0)" >Yellow</text><text x="1442.38" y="612.50" font-size="19.6" fill="#f2f2f2" transform="matrix(0.9308,0,0,1,99.747,0)" >100W</text><text x="744.23" y="652.75" font-size="23.6" fill="#f2f2f2" transform="matrix(0.7350,0,0,1,197.220,0)" >x: CIE31</text><text x="827.44" y="652.75" font-size="23.6" fill="#f2f2f2" transform="matrix(0.8000,0,0,1,165.489,0)" >0.2784</text><text x="918.19" y="652.75" font-size="23.6" fill="#f2f2f2" transform="matrix(0.8000,0,0,1,183.639,0)" >0.6476</text><text x="998.19" y="652.75" font-size="23.6" fill="#f2f2f2" transform="matrix(0.8000,0,0,1,199.639,0)" >0.2964</text><text x="1089.44" y="652.75" font-size="23.6" fill="#f2f2f2" transform="matrix(0.8000,0,0,1,217.889,0)" >0.1403</text><text x="1169.44" y="652.75" font-size="23.6" fill="#f2f2f2" transform="matrix(0.8000,0,0,1,233.889,0)" >0.1971</text><text x="1260.69" y="652.75" font-size="23.6" fill="#f2f2f2" transform="matrix(0.8000,0,0,1,252.139,0)" >0.2704</text><text x="1351.94" y="652.75" font-size="23.6" fill="#f2f2f2" transform="matrix(0.8000,0,0,1,270.389,0)" >0.4243</text><text x="1443.19" y="652.75" font-size="23.6" fill="#f2f2f2" transform="matrix(0.8000,0,0,1,288.639,0)" >0.2800</text><text x="744.31" y="689.95" font-size="23.6" fill="#f2f2f2" transform="matrix(0.7350,0,0,1,197.243,0)" >y: CIE31</text><text x="827.44" y="689.95" font-size="23.6" fill="#f2f2f2" transform="matrix(0.8000,0,0,1,165.489,0)" >0.2846</text><text x="918.19" y="689.95" font-size="23.6" fill="#f2f2f2" transform="matrix(0.8000,0,0,1,183.639,0)" >0.3336</text><text x="998.19" y="689.95" font-size="23.6" fill="#f2f2f2" transform="matrix(0.8000,0,0,1,199.639,0)" >0.5775</text><text x="1089.44" y="689.95" font-size="23.6" fill="#f2f2f2" transform="matrix(0.8000,0,0,1,217.889,0)" >0.0747</text><text x="1169.44" y="689.95" font-size="23.6" fill="#f2f2f2" transform="matrix(0.8000,0,0,1,233.889,0)" >0.2581</text><text x="1260.69" y="689.95" font-size="23.6" fill="#f2f2f2" transform="matrix(0.8000,0,0,1,252.139,0)" >0.1398</text><text x="1351.94" y="689.95" font-size="23.6" fill="#f2f2f2" transform="matrix(0.8000,0,0,1,270.389,0)" >0.4887</text><text x="1443.19" y="689.95" font-size="23.6" fill="#f2f2f2" transform="matrix(0.8000,0,0,1,288.639,0)" >0.2873</text><text x="743.95" y="727.15" font-size="23.6" fill="#f2f2f2" transform="matrix(0.7650,0,0,1,174.828,0)" >Y</text><text x="826.78" y="727.15" font-size="23.6" fill="#f2f2f2" transform="matrix(0.8000,0,0,1,165.357,0)" >197.2683</text><text x="918.19" y="727.15" font-size="23.6" fill="#f2f2f2" transform="matrix(0.8000,0,0,1,183.639,0)" >51.4900</text><text x="997.53" y="727.15" font-size="23.6" fill="#f2f2f2" transform="matrix(0.8000,0,0,1,199.507,0)" >139.1475</text><text x="1089.44" y="727.15" font-size="23.6" fill="#f2f2f2" transform="matrix(0.8000,0,0,1,217.889,0)" >33.5976</text><text x="1168.78" y="727.15" font-size="23.6" fill="#f2f2f2" transform="matrix(0.8000,0,0,1,233.757,0)" >167.2794</text><text x="1260.51" y="727.15" font-size="23.6" fill="#f2f2f2" transform="matrix(0.8000,0,0,1,252.101,0)" >78.7584</text><text x="1351.28" y="727.15" font-size="23.6" fill="#f2f2f2" transform="matrix(0.8000,0,0,1,270.257,0)" >173.8467</text><text x="1443.19" y="727.15" font-size="23.6" fill="#f2f2f2" transform="matrix(0.8000,0,0,1,288.639,0)" >342.2121</text><text x="744.02" y="764.35" font-size="23.6" fill="#f2f2f2" transform="matrix(0.8090,0,0,1,142.107,0)" >Target Y</text><text x="826.78" y="764.35" font-size="23.6" fill="#f2f2f2" transform="matrix(0.8000,0,0,1,165.357,0)" >197.2683</text><text x="918.57" y="764.35" font-size="23.6" fill="#f2f2f2" transform="matrix(0.8000,0,0,1,183.714,0)" >41.3355</text><text x="997.53" y="764.35" font-size="23.6" fill="#f2f2f2" transform="matrix(0.8000,0,0,1,199.507,0)" >142.3323</text><text x="1088.78" y="764.35" font-size="23.6" fill="#f2f2f2" transform="matrix(0.8000,0,0,1,217.757,0)" >13.6005</text><text x="1168.78" y="764.35" font-size="23.6" fill="#f2f2f2" transform="matrix(0.8000,0,0,1,233.757,0)" >155.9328</text><text x="1260.69" y="764.35" font-size="23.6" fill="#f2f2f2" transform="matrix(0.8000,0,0,1,252.139,0)" >54.9360</text><text x="1351.28" y="764.35" font-size="23.6" fill="#f2f2f2" transform="matrix(0.8000,0,0,1,270.257,0)" >183.6679</text><text x="1443.19" y="764.35" font-size="23.6" fill="#f2f2f2" transform="matrix(0.8000,0,0,1,288.639,0)" >342.2121</text><text x="743.83" y="801.55" font-size="23.6" fill="#f2f2f2" transform="matrix(0.8000,0,0,1,148.767,0)" >ΔE 2000</text><text x="826.78" y="801.55" font-size="23.6" fill="#f2f2f2" transform="matrix(0.8000,0,0,1,165.357,0)" >19.1275</text><text x="918.57" y="801.55" font-size="23.6" fill="#f2f2f2" transform="matrix(0.8000,0,0,1,183.714,0)" >4.3449</text><text x="998.01" y="801.55" font-size="23.6" fill="#f2f2f2" transform="matrix(0.8000,0,0,1,199.601,0)" >7.3634</text><text x="1088.78" y="801.55" font-size="23.6" fill="#f2f2f2" transform="matrix(0.8000,0,0,1,217.757,0)" >13.0572</text><text x="1169.26" y="801.55" font-size="23.6" fill="#f2f2f2" transform="matrix(0.8000,0,0,1,233.851,0)" >22.7434</text><text x="1260.03" y="801.55" font-size="23.6" fill="#f2f2f2" transform="matrix(0.8000,0,0,1,252.007,0)" >11.2263</text><text x="1351.85" y="801.55" font-size="23.6" fill="#f2f2f2" transform="matrix(0.8000,0,0,1,270.370,0)" >9.1553</text><text x="1443.01" y="801.55" font-size="23.6" fill="#f2f2f2" transform="matrix(0.8000,0,0,1,288.601,0)" >20.5415</text><rect x="0" y="819" width="1517" height="77" fill="#262626"/><rect x="2.0" y="822" width="186" height="80" rx="5" fill="url(#btng)"/><rect x="8.5" y="828" width="173" height="45.5" rx="3.5" fill="#c0c0c0" stroke="rgba(255,255,255,0.35)" stroke-width="1.2"/><text x="77.01" y="891.80" font-size="13.4" fill="#2c2c2c" font-weight="bold" transform="matrix(1.0000,0,0,1,0.000,0)" >White</text><rect x="191.0" y="822" width="186" height="80" rx="5" fill="url(#btng)"/><rect x="197.5" y="828" width="173" height="45.5" rx="3.5" fill="#c00000" stroke="rgba(255,255,255,0.35)" stroke-width="1.2"/><text x="271.34" y="891.80" font-size="13.4" fill="#2c2c2c" font-weight="bold" transform="matrix(1.0000,0,0,1,0.000,0)" >Red</text><rect x="380.0" y="822" width="186" height="80" rx="5" fill="url(#btng)"/><rect x="386.5" y="828" width="173" height="45.5" rx="3.5" fill="#00c000" stroke="rgba(255,255,255,0.35)" stroke-width="1.2"/><text x="453.77" y="891.80" font-size="13.4" fill="#2c2c2c" font-weight="bold" transform="matrix(1.0000,0,0,1,0.000,0)" >Green</text><rect x="569.0" y="822" width="186" height="80" rx="5" fill="url(#btng)"/><rect x="575.5" y="828" width="173" height="45.5" rx="3.5" fill="#0000c0" stroke="rgba(255,255,255,0.35)" stroke-width="1.2"/><text x="647.29" y="891.80" font-size="13.4" fill="#2c2c2c" font-weight="bold" transform="matrix(1.0000,0,0,1,-0.000,0)" >Blue</text><rect x="758.0" y="822" width="186" height="80" rx="5" fill="url(#btng)"/><rect x="764.5" y="828" width="173" height="45.5" rx="3.5" fill="#00bcbc" stroke="rgba(255,255,255,0.35)" stroke-width="1.2"/><text x="834.75" y="891.80" font-size="13.4" fill="#2c2c2c" font-weight="bold" transform="matrix(1.0000,0,0,1,-0.000,0)" >Cyan</text><rect x="947.0" y="822" width="186" height="80" rx="5" fill="url(#btng)"/><rect x="953.5" y="828" width="173" height="45.5" rx="3.5" fill="#c000c0" stroke="rgba(255,255,255,0.35)" stroke-width="1.2"/><text x="1012.33" y="891.80" font-size="13.4" fill="#2c2c2c" font-weight="bold" transform="matrix(1.0000,0,0,1,0.000,0)" >Magenta</text><rect x="1136.0" y="822" width="186" height="80" rx="5" fill="url(#btng)"/><rect x="1142.5" y="828" width="173" height="45.5" rx="3.5" fill="#c4c400" stroke="rgba(255,255,255,0.35)" stroke-width="1.2"/><text x="1208.00" y="891.80" font-size="13.4" fill="#2c2c2c" font-weight="bold" transform="matrix(1.0000,0,0,1,0.000,0)" >Yellow</text><rect x="1325.0" y="822" width="186" height="80" rx="5" fill="url(#btnsel)"/><rect x="1331.5" y="828" width="173" height="45.5" rx="3.5" fill="#ffffff" stroke="#e8e8e8" stroke-width="1.2"/><text x="1400.08" y="891.80" font-size="13.4" fill="#f4f4f4" font-weight="bold" transform="matrix(1.0000,0,0,1,-0.000,0)" >100W</text><rect x="1515.6" y="821.2" width="59.4" height="22.6" rx="4" fill="url(#ctlg)"/><rect x="1515.6" y="845" width="59.4" height="51" fill="url(#ctll)"/><circle cx="1545.3" cy="833" r="9" fill="url(#knob)"/><path d="M1539.5 836 L1545.3 830 L1551 836 Z" fill="#222"/><rect x="1527" y="853" width="37" height="36.5" rx="4" fill="url(#stopbox)" stroke="#1c1c1c" stroke-width="2.4"/><rect x="1537.5" y="863" width="16.5" height="17" fill="url(#stopsq)"/><rect x="1577" y="821" width="56.75" height="38" fill="url(#ctlg)"/><circle cx="1605.38" cy="840" r="12" fill="url(#knob)"/><rect x="1634.75" y="821" width="55.85" height="38" fill="url(#ctlg)"/><circle cx="1662.67" cy="840" r="12" fill="url(#knob)"/><rect x="1691.6" y="821" width="54.40" height="38" fill="url(#ctlg)"/><circle cx="1718.80" cy="840" r="12" fill="url(#knob)"/><rect x="1747" y="821" width="56.30" height="38" fill="url(#ctlg)"/><circle cx="1775.15" cy="840" r="12" fill="url(#knob)"/><rect x="1804.3" y="821" width="54.70" height="38" fill="url(#ctlg)"/><circle cx="1831.65" cy="840" r="12" fill="url(#knob)"/><rect x="1859" y="821" width="58" height="38" rx="4" fill="#2a2a2a"/><circle cx="1888" cy="839.5" r="11.5" fill="#262626"/><rect x="1600" y="835" width="10" height="10" fill="#1e1e1e"/><path d="M1658 833.5 L1669 840 L1658 846.5 Z" fill="#1e1e1e"/><path d="M1713 834 h-2 v12 h2 M1724 834 h2 v12 h-2" stroke="#1e1e1e" stroke-width="2" fill="none"/><path d="M1715 840 h8" stroke="#444" stroke-width="1.2"/><path d="M1775 840 c-3 -4 -8 -4 -8 0 c0 4 5 4 8 0 c3 -4 8 -4 8 0 c0 4 -5 4 -8 0 z" stroke="#1e1e1e" stroke-width="2.2" fill="none"/><path d="M1837 836 a7 6 0 0 0 -12 1 M1825 844 a7 6 0 0 0 12 -1" stroke="#1e1e1e" stroke-width="2.4" fill="none"/><path d="M1835 832 l3 5 l-5 0 z M1827 848 l-3 -5 l5 0 z" fill="#1e1e1e"/><rect x="1577" y="860" width="169" height="40" rx="4" fill="url(#ctlg)"/><rect x="1747" y="860" width="170" height="40" rx="4" fill="url(#ctlg)"/><circle cx="1614.5" cy="879" r="12" fill="url(#knob)"/><circle cx="1882" cy="879" r="12" fill="url(#knob)"/><path d="M1614 873 l-5 6 l5 6 M1619 873 l-5 6 l5 6" stroke="#2a2a2a" stroke-width="2" fill="none"/><path d="M1879 873 l5 6 l-5 6 M1884 873 l5 6 l-5 6" stroke="#2a2a2a" stroke-width="2" fill="none"/><text x="1646.69" y="888.75" font-size="27.7" fill="#303030" transform="matrix(1.0435,0,0,1,-71.600,0)"  stroke="#303030" stroke-width="0.5">Back</text><text x="1779.40" y="888.75" font-size="27.7" fill="#303030" transform="matrix(1.1728,0,0,1,-307.529,0)"  stroke="#303030" stroke-width="0.5">Next</text></svg>
<script>
(function(){
try{
var M=[2.4934969,-0.9313836,-0.4027108,-0.8294890,1.7626641,0.0236247,0.0358458,-0.0761724,0.9568845];
function paint(cv, fx, fy){
  var W=cv.width,H=cv.height,ctx=cv.getContext('2d');var im=ctx.createImageData(W,H),d=im.data;
  for(var j=0;j<H;j++){var y=Math.max(fy(j+0.5),1e-3);for(var i=0;i<W;i++){
    var x=fx(i+0.5);var X=x/y,Z=(1-x-y)/y;
    var r=M[0]*X+M[1]+M[2]*Z,g=M[3]*X+M[4]+M[5]*Z,b=M[6]*X+M[7]+M[8]*Z;
    if(r<0)r=0;if(g<0)g=0;if(b<0)b=0;var m=Math.max(r,g,b)||1;
    var p=(j*W+i)*4;d[p]=255*r/m;d[p+1]=255*g/m;d[p+2]=255*b/m;d[p+3]=255;
  }}
  ctx.putImageData(im,0,0);
}
var cv=document.getElementById('cie');var W=cv.width,H=cv.height;
var off=document.createElement('canvas');off.width=W;off.height=H;
paint(off,function(i){return (i+1161.9)/886-1161.9/886;},function(j){return (532.2-(j+26.2))/603;});
var ctx=cv.getContext('2d');
ctx.save();ctx.beginPath();var p=new Path2D('M154.3,503.0 C154.2,503.0 154.1,503.0 154.0,503.0 C153.9,503.1 153.7,503.1 153.5,503.1 C153.4,503.1 153.2,503.1 152.9,503.1 C152.6,503.1 152.2,503.0 151.9,502.9 C151.5,502.8 151.3,502.7 150.9,502.5 C150.5,502.3 150.1,502.1 149.6,501.8 C149.1,501.6 148.5,501.2 147.9,500.8 C147.2,500.4 146.5,499.9 145.7,499.4 C144.8,498.9 143.9,498.4 142.7,497.7 C141.6,497.0 140.2,496.2 138.7,495.3 C137.3,494.4 135.6,493.5 133.8,492.3 C131.9,491.1 129.9,489.8 127.6,488.1 C125.3,486.4 123.0,484.8 120.1,481.9 C117.1,479.1 113.8,475.9 110.0,471.1 C106.1,466.4 101.9,461.2 97.1,453.7 C92.3,446.1 86.9,437.4 80.9,426.0 C74.9,414.5 67.6,401.3 60.9,385.0 C54.1,368.7 46.9,349.4 40.2,328.1 C33.5,306.8 26.3,281.6 20.8,257.1 C15.3,232.7 10.2,205.7 7.3,181.3 C4.4,157.0 2.6,132.4 3.5,111.2 C4.3,89.9 7.1,69.4 12.3,53.6 C17.5,37.8 25.5,24.8 34.5,16.4 C43.4,8.0 54.7,4.6 65.8,3.2 C76.9,1.8 89.3,5.0 101.2,7.8 C113.1,10.6 125.4,15.6 137.1,20.0 C148.7,24.5 159.8,29.5 170.9,34.7 C182.0,39.9 192.7,45.4 203.4,51.2 C214.2,56.9 224.9,63.0 235.5,69.2 C246.1,75.5 256.7,82.0 267.2,88.5 C277.8,95.1 288.3,101.9 298.8,108.7 C309.4,115.5 320.0,122.5 330.6,129.4 C341.1,136.4 351.6,143.5 362.1,150.5 C372.6,157.5 383.1,164.5 393.5,171.5 C403.8,178.5 414.1,185.5 424.2,192.3 C434.3,199.2 444.3,206.0 454.1,212.6 C463.8,219.2 473.4,225.7 482.7,232.0 C492.0,238.3 501.0,244.4 509.6,250.2 C518.2,256.0 526.5,261.7 534.2,266.9 C541.8,272.1 548.8,276.8 555.5,281.4 C562.2,285.9 568.6,290.2 574.3,294.1 C580.0,298.0 585.2,301.4 589.9,304.6 C594.6,307.8 598.8,310.6 602.6,313.2 C606.4,315.8 609.6,318.0 612.7,320.1 C615.7,322.1 618.3,323.9 620.7,325.5 C623.2,327.2 625.2,328.6 627.2,329.9 C629.2,331.3 631.0,332.5 632.6,333.6 C634.2,334.7 635.7,335.7 637.0,336.6 C638.4,337.5 639.5,338.3 640.6,339.0 C641.6,339.7 642.5,340.2 643.2,340.8 C644.0,341.3 644.7,341.8 645.3,342.2 C645.9,342.6 646.2,342.8 646.8,343.2 C647.3,343.6 648.0,344.1 648.6,344.4 C649.1,344.7 649.4,345.0 649.8,345.2 C650.2,345.5 650.8,345.9 650.9,346.0 Z');ctx.clip(p);ctx.drawImage(off,0,0);ctx.fillStyle='rgba(0,0,0,0.4)';ctx.fillRect(0,0,W,H);ctx.restore();
ctx.save();ctx.beginPath();var t=[[234.79,89.93],[602.48,313.04],[132.90,469.82]];ctx.moveTo(t[0][0],t[0][1]);ctx.lineTo(t[1][0],t[1][1]);ctx.lineTo(t[2][0],t[2][1]);ctx.closePath();ctx.clip();ctx.drawImage(off,0,0);ctx.restore();
var iv=document.getElementById('inset');
paint(iv,function(i){return 0.3127+(i-123.5)/(886*1.7);},function(j){return 0.329-(j-127.2)/(603*1.7);});
}catch(e){}
})();
</script>
</body></html>
